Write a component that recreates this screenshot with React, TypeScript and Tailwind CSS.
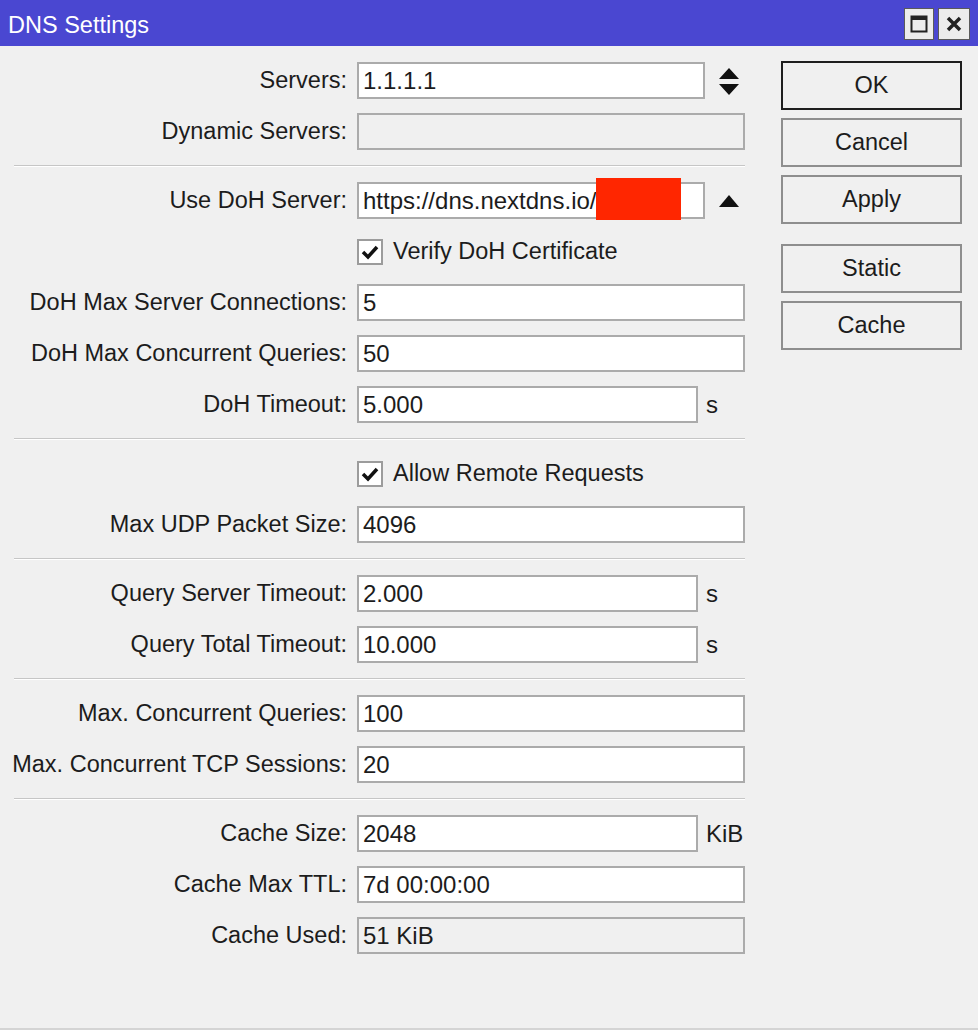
import type { ReactNode } from "react";

type FieldProps = {
  label: string;
  value?: string;
  disabled?: boolean;
  suffix?: string;
  narrow?: boolean;
  children?: ReactNode;
  after?: ReactNode;
};

function Field({ label, value, disabled, suffix, narrow, children, after }: FieldProps) {
  return (
    <div className="grid grid-cols-[333px_1fr] grid-rows-[37px] gap-x-[10px] items-center h-[37px]">
      <label className="justify-self-end whitespace-nowrap text-[23.5px]">{label}:</label>
      <div className="flex items-center h-[37px]">
        <div
          className={`h-[37px] border-2 border-[#ababab] flex items-center px-[4px] whitespace-nowrap ${
            disabled ? "bg-[#f0f0f0]" : "bg-white"
          } ${narrow ? "w-[348px]" : suffix ? "w-[341px]" : "w-[388px]"}`}
        >
          {value}
          {children}
        </div>
        {suffix && <span className="ml-[8px]">{suffix}</span>}
        {after}
      </div>
    </div>
  );
}

function Check({ label }: { label: string }) {
  return (
    <div className="grid grid-cols-[333px_1fr] gap-x-[10px] items-center h-[37px]">
      <span />
      <div className="flex items-center gap-[10px]">
        <span className="w-[26px] h-[26px] border-2 border-[#9c9c9c] bg-white flex items-center justify-center">
          <svg width="18" height="16" viewBox="0 0 18 16">
            <path d="M2 8 L7 13 L16 3" fill="none" stroke="#111" strokeWidth="3.5" />
          </svg>
        </span>
        <span className="text-[23.5px]">{label}</span>
      </div>
    </div>
  );
}

function Separator() {
  return <div className="h-[2px] my-[1px] border-t border-[#c6c6c6] border-b border-b-white" />;
}

function DialogButton({ label, primary }: { label: string; primary?: boolean }) {
  return (
    <button
      className={`h-[49px] w-full border-2 bg-[#f0f0f0] text-[#1c1c1c] text-[23.5px] ${
        primary ? "border-[#1e1e1e]" : "border-[#8e8e8e]"
      }`}
    >
      {label}
    </button>
  );
}

export default function App() {
  return (
    <div className="w-[978px] h-[1030px] bg-[#f0f0f0] flex flex-col font-['Liberation_Sans',Arial,sans-serif] text-[24px] leading-none text-[#1c1c1c]">
      <header className="h-[46px] bg-[#4a47d1] flex items-center justify-between pl-[8px] pr-[8px]">
        <h1 className="text-white text-[23.5px] pt-[5px]">DNS Settings</h1>
        <div className="flex gap-[4px] pt-[2px]">
          <span className="w-[30px] h-[32px] bg-[#ececec] border border-[#5a5a5a] flex items-center justify-center">
            <svg width="18" height="18" viewBox="0 0 18 18">
              <rect x="1.5" y="1.5" width="15" height="15" fill="none" stroke="#222" strokeWidth="2" />
              <rect x="1" y="1" width="16" height="4" fill="#222" />
            </svg>
          </span>
          <span className="w-[32px] h-[32px] bg-[#ececec] border border-[#5a5a5a] flex items-center justify-center">
            <svg width="16" height="16" viewBox="0 0 16 16">
              <path d="M2 2 L14 14 M14 2 L2 14" stroke="#222" strokeWidth="3.5" />
            </svg>
          </span>
        </div>
      </header>

      <main className="flex-1 flex pt-[16px] pl-[14px] border-b-2 border-[#d4d4d4]">
        <div className="w-[731px] flex flex-col gap-[14px]">
          <Field
            label="Servers"
            value="1.1.1.1"
            narrow
            after={
              <svg className="ml-[13px]" width="22" height="30" viewBox="0 0 22 30">
                <path d="M11 2 L21 13 L1 13 Z M1 18 L21 18 L11 29 Z" fill="#111" />
              </svg>
            }
          />
          <Field label="Dynamic Servers" disabled />
          <Separator />
          <Field
            label="Use DoH Server"
            value="https://dns.nextdns.io/"
            narrow
            after={
              <svg className="ml-[13px]" width="22" height="14" viewBox="0 0 22 14">
                <path d="M11 1 L21 13 L1 13 Z" fill="#111" />
              </svg>
            }
          >
            <span className="inline-block shrink-0 w-[85px] h-[42px] -mt-[7px] -mb-[3px] bg-[#ff2600]" />
          </Field>
          <Check label="Verify DoH Certificate" />
          <Field label="DoH Max Server Connections" value="5" />
          <Field label="DoH Max Concurrent Queries" value="50" />
          <Field label="DoH Timeout" value="5.000" suffix="s" />
          <Separator />
          <Check label="Allow Remote Requests" />
          <Field label="Max UDP Packet Size" value="4096" />
          <Separator />
          <Field label="Query Server Timeout" value="2.000" suffix="s" />
          <Field label="Query Total Timeout" value="10.000" suffix="s" />
          <Separator />
          <Field label="Max. Concurrent Queries" value="100" />
          <Field label="Max. Concurrent TCP Sessions" value="20" />
          <Separator />
          <Field label="Cache Size" value="2048" suffix="KiB" />
          <Field label="Cache Max TTL" value="7d 00:00:00" />
          <Field label="Cache Used" value="51 KiB" disabled />
        </div>

        <div className="ml-[36px] w-[181px] flex flex-col gap-[8px] -mt-[1px]">
          <DialogButton label="OK" primary />
          <DialogButton label="Cancel" />
          <DialogButton label="Apply" />
          <div className="h-[4px]" />
          <DialogButton label="Static" />
          <DialogButton label="Cache" />
        </div>
      </main>
    </div>
  );
}
